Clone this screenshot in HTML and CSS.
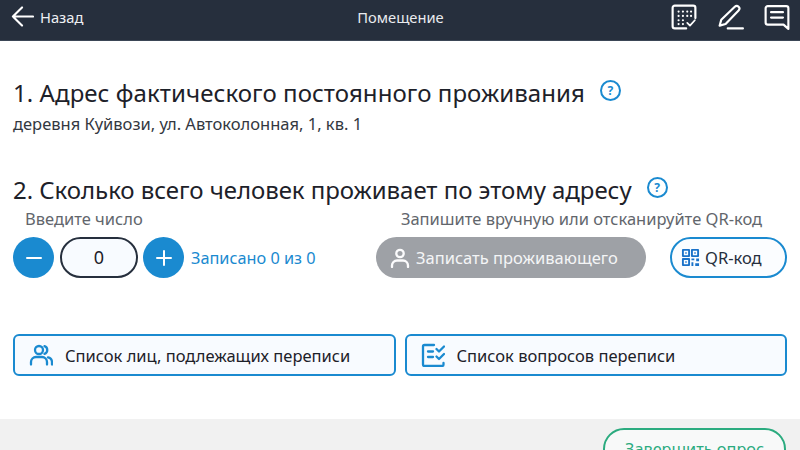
FILE: index.html
```html
<!DOCTYPE html>
<html lang="ru">
<head>
<meta charset="utf-8">
<title>Помещение</title>
<link rel="stylesheet" href="styles.css">
</head>
<body>
<div class="page">
  <header class="topbar">
    <div class="back">
      <svg class="back-icon" viewBox="0 0 24 24"><path d="M23 12H2M11.500 2.500 2 12l9.500 9.500"/></svg>
      <span>Назад</span>
    </div>
    <div class="topbar-title">Помещение</div>
    <div class="topbar-icons">
      <svg class="top-icon" viewBox="0 0 24 24"><path class="thick" d="M14 22.500H3.500a2 2 0 0 1-2-2v-17a2 2 0 0 1 2-2h17a2 2 0 0 1 2 2V13"/><path class="dots" d="M7 7h.01M11 7h.01M15 7h.01M18.500 7h.01M7 11h.01M11 11h.01M15 11h.01M18.500 11h.01M7 15h.01M11 15h.01M7 18.500h.01M11 18.500h.01"/><path class="thin" d="m15 17.500 2.500 2.500 4.500-5"/></svg>
      <svg class="top-icon" viewBox="0 0 24 24"><path class="thick" d="M1.500 20 3 14.500 15.500 2.500a2.500 2.500 0 0 1 3.500 0 2.500 2.500 0 0 1 0 3.500L7 18.500 1.500 20ZM9 22.500h14"/></svg>
      <svg class="top-icon" viewBox="0 0 24 24"><path class="thick" d="M3.500 2h17a2 2 0 0 1 2 2v19l-4.500-4H3.500a2 2 0 0 1-2-2V4a2 2 0 0 1 2-2ZM6.500 7.500h11M6.500 12.500h11"/></svg>
    </div>
  </header>

  <main class="content">
    <section class="address">
      <h2 class="heading heading-first">1. Адрес фактического постоянного проживания <span class="help">?</span></h2>
      <p class="address-text">деревня Куйвози, ул. Автоколонная, 1, кв. 1</p>
    </section>

    <section class="residents">
      <h2 class="heading heading-second">2. Сколько всего человек проживает по этому адресу <span class="help">?</span></h2>
      <div class="controls">
        <div class="count-col">
          <div class="hint hint-count">Введите число</div>
          <div class="stepper">
            <button class="round">
              <svg viewBox="0 0 16 16"><path d="M1 8h14"/></svg>
            </button>
            <div class="count-value">0</div>
            <button class="round">
              <svg viewBox="0 0 16 16"><path d="M1 8h14M8 1v14"/></svg>
            </button>
            <span class="recorded">Записано 0 из 0</span>
          </div>
        </div>
        <div class="record-col">
          <div class="hint hint-record">Запишите вручную или отсканируйте QR-код</div>
          <div class="record-actions">
            <button class="record-btn">
              <svg viewBox="0 0 20 20"><circle cx="10" cy="5.500" r="3.700"/><path d="M2 19v-1.500A5 5 0 0 1 7 12.500h6a5 5 0 0 1 5 5V19"/></svg>
              <span>Записать проживающего</span>
            </button>
            <button class="qr-btn">
              <svg viewBox="0 0 20 20"><path d="M2 2h6.500v6.500H2zM11.500 2H18v6.500h-6.500zM2 11.500h6.500V18H2z"/><path class="qr-fill" d="M4.500 4.500h1.500V6H4.500zM14 4.500h1.500V6H14zM4.500 14h1.500v1.500H4.500zM11 11h3v2h-3zM16 11h3v3h-3zM11 15h2v4h-2zM15 16h4v3h-4z"/></svg>
              <span>QR-код</span>
            </button>
          </div>
        </div>
      </div>
    </section>

    <section class="lists">
      <button class="list-btn">
        <svg viewBox="0 0 24 24"><circle cx="10" cy="7" r="4"/><path d="M15.500 3.200a4 4 0 0 1 0 7.600M2 21.500V19a5 5 0 0 1 5-5h6a5 5 0 0 1 5 5v2.500M19 14.300a5 5 0 0 1 4 4.700v2.500"/></svg>
        <span>Список лиц, подлежащих переписи</span>
      </button>
      <button class="list-btn">
        <svg viewBox="0 0 24 24"><path d="M13 2H3.500A1.500 1.500 0 0 0 2 3.500v18A1.500 1.500 0 0 0 3.500 23H21a1.500 1.500 0 0 0 1.500-1.500V20M7 8.500h5M7 14h5"/><path d="m15.500 6 2.500 2.500 5-5M15.500 13.500 18 16l5-5"/></svg>
        <span>Список вопросов переписи</span>
      </button>
    </section>
  </main>

  <footer class="footer">
    <button class="finish">Завершить опрос</button>
  </footer>
</div>
</body>
</html>
```

FILE: styles.css
```css
* { box-sizing: border-box; }
html, body { margin: 0; padding: 0; }
body {
  width: 800px;
  height: 450px;
  overflow: hidden;
  background: #fff;
  font-family: "Noto Sans", "Open Sans", sans-serif;
  color: #1d2129;
}
button { font-family: inherit; padding: 0; cursor: pointer; }
svg { display: block; fill: none; stroke-linecap: round; stroke-linejoin: round; }

.page { display: flex; flex-direction: column; height: 450px; overflow: hidden; }

.topbar {
  flex: none;
  height: 41px;
  background: #262f3d;
  border-bottom: 1px solid #3b4656;
  display: grid;
  grid-template-columns: 1fr auto 1fr;
  align-items: center;
  padding: 0 10px 7px 11px;
  color: #fff;
}
.back { display: flex; align-items: center; gap: 6px; font-size: 14.7px; color: #eef0f3; }
.back-icon { width: 23px; height: 23px; stroke: #fff; stroke-width: 2.200; }
.topbar-title { font-size: 14.7px; color: #e9ebee; }
.topbar-icons { display: flex; justify-content: flex-end; gap: 20.500px; }
.top-icon { width: 26px; height: 26px; }
.thick { stroke: #fff; stroke-width: 2; }
.thin { stroke: #fff; stroke-width: 1.600; }
.dots { stroke: #fff; stroke-width: 2; }

.content { flex: none; height: 378px; padding: 36px 13px 0 13px; display: flex; flex-direction: column; }

.heading {
  margin: 0;
  font-size: 24px;
  font-weight: 400;
  line-height: 32px;
  color: #1d2129;
  display: flex;
  align-items: center;
  white-space: nowrap;
}
.heading-first { letter-spacing: 0.070px; }
.heading-second { letter-spacing: -0.040px; }
.help {
  width: 21px;
  height: 21px;
  border: 2px solid #1a8ad0;
  border-radius: 50%;
  margin-left: 15px;
  margin-top: -6px;
  color: #1a8ad0;
  font-size: 12px;
  line-height: 17px;
  font-weight: 700;
  text-align: center;
}
.address-text { margin: 5px 0 0; font-size: 16.5px; line-height: 20px; color: #33383f; }

.residents { margin-top: 40px; }
.controls { display: flex; justify-content: space-between; margin-top: 3px; }
.hint { font-size: 16.5px; line-height: 20px; color: #62666c; }
.hint-count { padding-left: 12px; }
.hint-record { text-align: center; padding-right: 1px; }
.stepper { display: flex; align-items: center; margin-top: 8px; }
.round {
  width: 41px;
  height: 41px;
  border: 0;
  border-radius: 50%;
  background: #1a8ad0;
  display: flex;
  align-items: center;
  justify-content: center;
}
.round svg { width: 16px; height: 16px; stroke: #fff; stroke-width: 2; }
.count-value {
  width: 78px;
  height: 41px;
  margin: 0 5px 0 6px;
  border: 2px solid #262f3d;
  border-radius: 21px;
  background: #f8fbff;
  font-size: 18px;
  line-height: 36px;
  text-align: center;
  color: #1d2129;
}
.recorded { margin-left: 7px; font-size: 16.3px; color: #1a8ad0; }

.record-col { width: 410px; }
.record-actions { display: flex; justify-content: space-between; margin-top: 8px; }
.record-btn {
  width: 270px;
  height: 41px;
  margin-left: -1px;
  border: 0;
  border-radius: 21px;
  background: #9ea1a6;
  color: #f4f5f6;
  font-size: 16.5px;
  display: flex;
  align-items: center;
  gap: 6px;
  padding-left: 14px;
}
.record-btn svg { width: 20px; height: 20px; stroke: #fbfbfc; stroke-width: 2.300; }
.qr-btn {
  width: 117px;
  height: 41px;
  border: 2px solid #1a8ad0;
  border-radius: 21px;
  background: #fbfdff;
  color: #262f3d;
  font-size: 16.5px;
  display: flex;
  align-items: center;
  gap: 5px;
  padding-left: 9px;
}
.qr-btn svg { width: 19px; height: 19px; stroke: #1a72c9; stroke-width: 2; }
.qr-fill { fill: #1a72c9; stroke: none; }

.lists { margin-top: 56px; display: flex; gap: 9px; }
.list-btn {
  flex: 1;
  height: 42px;
  border: 2px solid #1a8ad0;
  border-radius: 6px;
  background: #f8fbff;
  color: #1d2129;
  font-size: 16.5px;
  display: flex;
  align-items: center;
  gap: 12px;
  padding-left: 14px;
  text-align: left;
}
.list-btn svg { width: 24px; height: 24px; stroke: #1a8ad0; stroke-width: 2.300; flex: none; }

.footer {
  flex: 1;
  background: #f1f1f1;
  display: flex;
  justify-content: flex-end;
  align-items: flex-start;
  padding: 9px 14px 0 0;
}
.finish {
  width: 183px;
  height: 42px;
  flex: none;
  border: 2px solid #2bab7f;
  border-radius: 21px;
  background: #f8f9f9;
  color: #2bab7f;
  font-size: 16.3px;
}
```
